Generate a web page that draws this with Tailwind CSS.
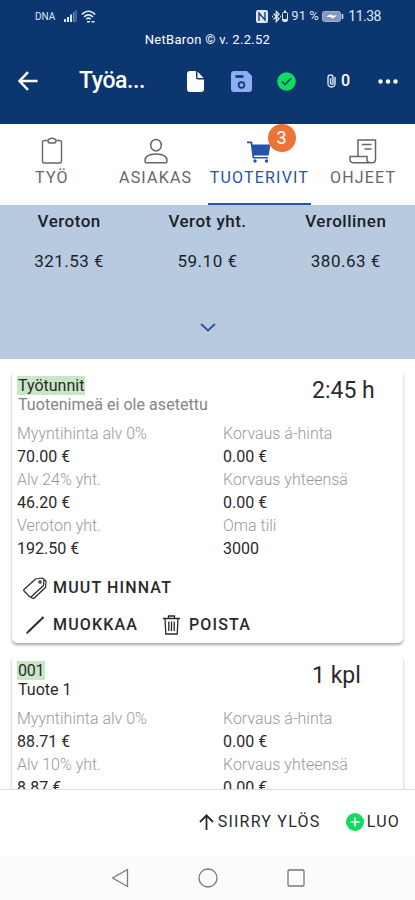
<!DOCTYPE html>
<html lang="fi">
<head>
    <meta charset="UTF-8">
    <meta name="viewport" content="width=device-width, initial-scale=1.0">
    <title>NetBaron</title>
    <script src="https://cdn.jsdelivr.net/npm/@tailwindcss/browser@4"></script>
</head>
<body class="flex flex-col h-[900px] w-[415px] overflow-hidden bg-white font-['Roboto',sans-serif] text-[#2a2a2a]">

    <header class="h-[124px] shrink-0 bg-[#0b3670] text-white">
        <!-- status bar -->
        <div class="flex h-8 items-center pl-[35px] pr-[34px] text-[#dfe8f5]">
            <span class="w-[29px] text-[10px]">DNA</span>
            <svg class="h-3 w-[13px]" viewBox="0 0 13 12" fill="currentColor">
                <path d="M0 9h2v3H0zM3 7h2v5H3zM6 4.5h2V12H6z"/>
                <path d="M9 2h1.500v10H9zM11.500 0h1v12h-1z" opacity=".5"/>
            </svg>
            <svg class="ml-1 h-[13px] w-[15px]" viewBox="0 0 15 13" fill="none" stroke="currentColor" stroke-width="1.600">
                <path d="M.8 4.500c4-4.400 9.400-4.400 13.400 0M3 7c2.700-2.900 6.300-2.900 9 0M5.300 9.300c1.300-1.300 3.100-1.300 4.400 0"/>
                <path d="M6 11.700h3M10.500 11.700h3"/>
            </svg>
            <svg class="ml-auto h-[13px] w-[12px]" viewBox="0 0 12 13">
                <rect width="12" height="13" rx="2" fill="currentColor"/>
                <path d="M3 11V3l6 7V2" fill="none" stroke="#0b3670" stroke-width="1.300"/>
            </svg>
            <svg class="ml-1 h-[13px] w-[9px]" viewBox="0 0 9 13" fill="none" stroke="currentColor" stroke-width="1.300">
                <path d="M1.500 3.800l5.500 5-2.700 2.700v-10L7 4.200l-5.500 5"/>
                <path d="M0 6.500h1M8 6.500h1"/>
            </svg>
            <svg class="h-[13px] w-[8px]" viewBox="0 0 8 13" fill="none" stroke="currentColor">
                <rect x="1.500" y="2.500" width="5" height="9" rx="1"/>
                <path d="M3 1.500h2M2 10h4" stroke-width="2"/>
            </svg>
            <span class="ml-[2px] w-[31px] whitespace-nowrap text-[13px]">91 %</span>
            <svg class="h-[11px] w-[22px]" viewBox="0 0 22 11">
                <rect x=".5" y=".5" width="18" height="10" rx="2" fill="#8299bd" stroke="#9fb1cd"/>
                <path d="M4 5.500l5.500-2.500v1.500H15L10 8V6.500z" fill="#fff"/>
                <path d="M20.500 3v5" stroke="#dfe8f5" stroke-width="1.500"/>
            </svg>
            <span class="ml-[4px] text-[14px] tracking-[-0.500px]">11.38</span>
        </div>
        <div class="h-[15px] text-center text-[13px] leading-[15px] tracking-[0.300px]">NetBaron © v. 2.2.52</div>

        <!-- toolbar -->
        <div class="flex h-[68px] items-center pl-[18px] pr-[17px]">
            <svg class="h-5 w-5" viewBox="0 0 20 20" fill="none" stroke="currentColor" stroke-width="2.500">
                <path d="M19.500 10H2M10 1.200L1.500 10l8.500 8.800"/>
            </svg>
            <h1 class="ml-[41px] w-[108px] text-[23px] font-medium tracking-[-0.400px]">Työa...</h1>
            <svg class="h-[21px] w-[17px]" viewBox="0 0 17 21" fill="currentColor">
                <path d="M3 0h6v6.500Q9 8.500 11 8.500h6V18q0 3-3 3H3q-3 0-3-3V3Q0 0 3 0z"/>
                <path d="M10.500.5L16.500 7H11q-.5 0-.5-.5z"/>
            </svg>
            <svg class="ml-[27px] h-[21px] w-[21px]" viewBox="0 0 21 21">
                <path d="M3 0h13l5 5v13q0 3-3 3H3q-3 0-3-3V3q0-3 3-3z" fill="#8fadf5"/>
                <path d="M4.500 5.500h8" stroke="#0b3670" stroke-width="2.600"/>
                <circle cx="10.500" cy="14" r="2.900" fill="none" stroke="#0b3670" stroke-width="1.600"/>
            </svg>
            <svg class="ml-[25px] h-[19px] w-[19px]" viewBox="0 0 19 19">
                <circle cx="9.500" cy="9.500" r="9.300" fill="#10dc60"/>
                <path d="M5 9.500l3 3.200 6-6.500" fill="none" stroke="#0b3670" stroke-width="1.500"/>
            </svg>
            <svg class="ml-[31px] h-[14px] w-[9px]" viewBox="0 0 9 14" fill="none" stroke="#d5dbe5" stroke-width="1.500">
                <path d="M8 3v6.500a3.500 3.500 0 0 1-7 0V3.500a2.500 2.500 0 0 1 5 0V9a1.200 1.200 0 0 1-2.400 0V4"/>
            </svg>
            <span class="ml-[5px] text-[16px] font-medium">0</span>
            <svg class="ml-auto h-[5px] w-[20px]" viewBox="0 0 20 5" fill="currentColor">
                <circle cx="2.500" cy="2.500" r="2.200"/><circle cx="10" cy="2.500" r="2.200"/><circle cx="17.500" cy="2.500" r="2.200"/>
            </svg>
        </div>
    </header>

    <!-- tabs -->
    <nav class="grid h-[81px] shrink-0 grid-cols-4 text-[16px] leading-[20px] tracking-[1.200px] text-[#666]">
        <div class="flex flex-col items-center pt-[13px]">
            <svg class="h-[28px] w-[22px]" viewBox="0 0 22 28" fill="none" stroke="currentColor" stroke-width="1.400">
                <path d="M6.500 3.500h-3q-2 0-2 2v18.500q0 2 2 2h15q2 0 2-2V5.500q0-2-2-2h-3"/>
                <path d="M7 3.500q0-1.500 1.500-1.500Q11 .500 13.500 2 15 2 15 3.500 15 6 13 6H9Q7 6 7 3.500z"/>
            </svg>
            <span class="mt-[3px]">TYÖ</span>
        </div>
        <div class="flex flex-col items-center pt-[13px]">
            <svg class="h-[28px] w-[24px]" viewBox="0 0 24 28" fill="none" stroke="currentColor" stroke-width="1.500">
                <ellipse cx="12" cy="8.200" rx="5.300" ry="5.800"/>
                <path d="M1 24c0-5 5-7 11-7s11 2 11 7q0 1.800-1.800 1.800H2.800Q1 25.800 1 24z"/>
            </svg>
            <span class="mt-[3px]">ASIAKAS</span>
        </div>
        <div class="relative flex flex-col items-center border-b-2 border-[#2653a8] pt-[13px] text-[#2653a8]">
            <svg class="h-[28px] w-[24px]" viewBox="0 0 24 28" fill="currentColor">
                <path d="M0 4.500h5l.7 3H23.500l-1.800 11H6.900l.3 1.500H21v1.500H5.700L3.600 6.300H0z"/>
                <circle cx="8" cy="24" r="1.700"/><circle cx="19.500" cy="24" r="1.700"/>
            </svg>
            <span class="mt-[3px]">TUOTERIVIT</span>
            <span class="absolute left-[60px] top-0 flex h-[28px] w-[28px] items-center justify-center rounded-full bg-[#ed7338] text-[18px] tracking-normal text-white">3</span>
        </div>
        <div class="flex flex-col items-center pt-[13px]">
            <svg class="h-[28px] w-[28px]" viewBox="0 0 28 28" fill="none" stroke="currentColor" stroke-width="1.500">
                <path d="M9 19.500V3h17.500v19q0 3.800-3.500 3.800H5q-4 0-4-3.300V19.500h17v3q0 3 3.500 3.300"/>
                <path d="M13 7.500h9.500M15.500 12h7"/>
            </svg>
            <span class="mt-[3px]">OHJEET</span>
        </div>
    </nav>

    <!-- totals -->
    <section class="flex h-[154px] shrink-0 flex-col items-center bg-[#b8cae0] text-[#1a1f28]">
        <div class="grid w-full grid-cols-3 pt-[6px] text-center text-[17px] leading-[20px] tracking-[0.500px]">
            <span class="font-medium">Veroton</span>
            <span class="font-medium">Verot yht.</span>
            <span class="font-medium">Verollinen</span>
            <span class="mt-5">321.53 €</span>
            <span class="mt-5">59.10 €</span>
            <span class="mt-5">380.63 €</span>
        </div>
        <svg class="mt-[52px] h-[9px] w-[16px]" viewBox="0 0 16 9" fill="none" stroke="#2653a8" stroke-width="1.800">
            <path d="M1 1l7 6.500L15 1"/>
        </svg>
    </section>

    <!-- product rows -->
    <main class="flex h-[430px] shrink-0 flex-col gap-[13px] overflow-hidden px-3 pt-3">
        <article class="h-[272px] shrink-0 rounded-[5px] pl-[5px] pt-[5px] shadow-[0_2px_3px_rgba(0,0,0,0.35)]">
            <div class="flex h-[46px] justify-between text-[16px] leading-[19px]">
                <div>
                    <div><span class="inline-block bg-[#c8e8c5] px-px">Työtunnit</span></div>
                    <div class="pl-px tracking-[0.050px] text-[#858585]">Tuotenimeä ei ole asetettu</div>
                </div>
                <div class="w-[91px] pt-[5px] text-[23px] leading-[20px]">2:45 h</div>
            </div>
            <div class="grid grid-cols-[206px_1fr] text-[16px] leading-[23px]">
                <span class="font-light text-[#999]">Myyntihinta alv 0%</span>
                <span class="font-light text-[#999]">Korvaus á-hinta</span>
                <span>70.00 €</span>
                <span>0.00 €</span>
                <span class="font-light text-[#999]">Alv 24% yht.</span>
                <span class="font-light text-[#999]">Korvaus yhteensä</span>
                <span>46.20 €</span>
                <span>0.00 €</span>
                <span class="font-light text-[#999]">Veroton yht.</span>
                <span class="font-light text-[#999]">Oma tili</span>
                <span>192.50 €</span>
                <span>3000</span>
            </div>
            <div class="mt-[9px] flex h-[37px] items-center pl-[6px] text-[16px] font-medium tracking-[1.150px]">
                <svg class="h-[22px] w-[24px]" viewBox="0 0 24 22" fill="none" stroke="currentColor" stroke-width="1.200" stroke-linejoin="round">
                    <path d="M1 12.500L12.500 2l7-1 1.500 1.500-.5 6L8.500 19.500q-1 .800-2 0L1 14q-.6-.8 0-1.500z"/>
                    <path d="M21 2.500l2 1.500-.5 6.500L11 21.200q-1 .6-2-.2l-1-1"/>
                    <circle cx="17" cy="5" r="1.200"/>
                </svg>
                <span class="ml-[6px]">MUUT HINNAT</span>
            </div>
            <div class="flex h-[37px] items-center pl-[9px] text-[16px] font-medium tracking-[1.150px]">
                <svg class="h-[18px] w-[18px]" viewBox="0 0 18 18" stroke="currentColor">
                    <path d="M.5 17.500l2-2" stroke-width="1.500"/>
                    <path d="M2 16L15.500 3" stroke-width="2"/>
                    <path d="M15.500 3L17.500 1" stroke-width="2.200"/>
                </svg>
                <span class="ml-[9px] w-[110px]">MUOKKAA</span>
                <svg class="h-[20px] w-[17px]" viewBox="0 0 17 20" fill="none" stroke="currentColor" stroke-width="1.300">
                    <path d="M0 3.500h17M5.500 3V1h6v2M2 3.500l.8 15.500h11.400L15 3.500M5.800 6.500v9.500M8.500 6.500v9.500M11.200 6.500v9.500"/>
                </svg>
                <span class="ml-[9px]">POISTA</span>
            </div>
        </article>

        <article class="h-[272px] shrink-0 rounded-[5px] pl-[5px] pt-[5px] shadow-[0_2px_3px_rgba(0,0,0,0.35)]">
            <div class="flex h-[46px] justify-between text-[16px] leading-[19px]">
                <div>
                    <div><span class="inline-block bg-[#c8e8c5] px-px tracking-[-0.200px]">001</span></div>
                    <div class="pl-px">Tuote 1</div>
                </div>
                <div class="w-[91px] pt-[5px] text-[23px] leading-[20px]">1 kpl</div>
            </div>
            <div class="grid grid-cols-[206px_1fr] text-[16px] leading-[23px]">
                <span class="font-light text-[#999]">Myyntihinta alv 0%</span>
                <span class="font-light text-[#999]">Korvaus á-hinta</span>
                <span>88.71 €</span>
                <span>0.00 €</span>
                <span class="font-light text-[#999]">Alv 10% yht.</span>
                <span class="font-light text-[#999]">Korvaus yhteensä</span>
                <span>8.87 €</span>
                <span>0.00 €</span>
            </div>
        </article>
    </main>

    <!-- footer actions -->
    <footer class="flex h-[67px] shrink-0 items-center justify-end border-t border-[#ddd] pb-[2px] pr-[15px] text-[16px] tracking-[1.200px]">
        <svg class="h-[16px] w-[15px]" viewBox="0 0 15 16" fill="none" stroke="currentColor" stroke-width="1.800">
            <path d="M7.500 16V1.500M1 8l6.500-6.700L14 8"/>
        </svg>
        <span class="ml-[4px] w-[128px] whitespace-nowrap">SIIRRY YLÖS</span>
        <svg class="h-[18px] w-[18px]" viewBox="0 0 18 18">
            <circle cx="9" cy="9" r="9" fill="#10dc60"/>
            <path d="M9 4.500v9M4.500 9h9" stroke="#fff" stroke-width="1.500"/>
        </svg>
        <span class="ml-[3px]">LUO</span>
    </footer>

    <!-- system navigation -->
    <div class="flex h-[44px] shrink-0 items-center justify-center gap-[69px] bg-[#fbfbfb]">
        <svg class="h-5 w-[18px]" viewBox="0 0 18 20" fill="none" stroke="#777" stroke-width="1.300" stroke-linejoin="round">
            <path d="M16.500 1.500v17L1.500 10z"/>
        </svg>
        <svg class="h-5 w-5" viewBox="0 0 20 20" fill="none" stroke="#777" stroke-width="1.300">
            <circle cx="10" cy="10" r="9"/>
        </svg>
        <svg class="h-[18px] w-[18px]" viewBox="0 0 18 18" fill="none" stroke="#777" stroke-width="1.300">
            <rect x="1" y="1" width="16" height="16" rx="1"/>
        </svg>
    </div>
</body>
</html>
